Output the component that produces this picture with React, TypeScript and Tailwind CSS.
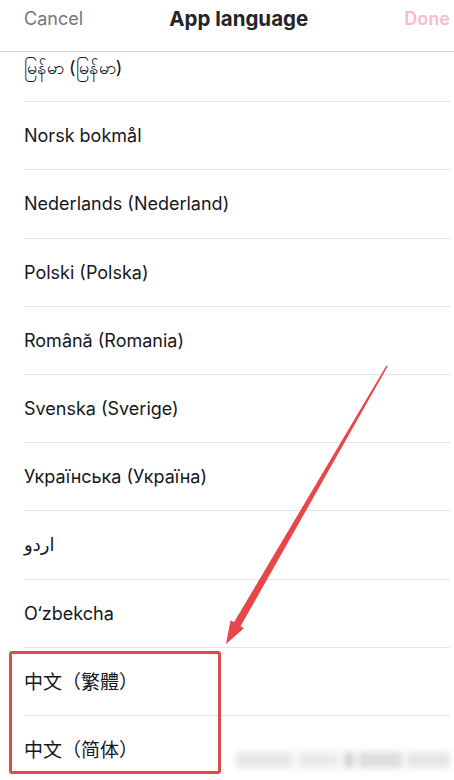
const languages = [
  "မြန်မာ (မြန်မာ)",
  "Norsk bokmål",
  "Nederlands (Nederland)",
  "Polski (Polska)",
  "Română (Romania)",
  "Svenska (Sverige)",
  "Українська (Україна)",
  "اردو",
  "O‘zbekcha",
  "中文（繁體）",
  "中文（简体）",
];

const fontStack =
  "font-['Inter','Noto_Sans_CJK_TC','Noto_Sans','DejaVu_Sans',sans-serif]";

const Header = () => {
  return (
    <div className="relative z-10 flex h-[52px] shrink-0 items-start justify-between border-b border-[#d6d6d8] bg-white pl-6 pr-1 pt-[6px]">
      <button className="text-[18px] leading-[26px] text-[#75767c]">
        Cancel
      </button>
      <h1 className="mr-[10px] text-[20.5px] font-bold leading-[26px] text-[#24252b]">
        App language
      </h1>
      <button className="text-[18px] font-semibold leading-[26px] text-[#f6bcc7]">
        Done
      </button>
    </div>
  );
};

const Row = ({ label }: { label: string }) => {
  const cjk = /[\u4e00-\u9fff]/.test(label);
  return (
    <div className="ml-6 mr-1 flex h-[68.2px] items-center border-b border-[#e4e4e6]">
      <span
        className={
          cjk
            ? "font-['Noto_Sans_CJK_TC',sans-serif] text-[19px] text-[#16171d]"
            : "text-[18px] text-[#16171d]"
        }
      >
        {label}
      </span>
    </div>
  );
};

export default function App() {
  return (
    <div
      className={`relative flex h-[780px] w-[454px] flex-col overflow-hidden bg-white ${fontStack}`}
    >
      <Header />
      <div className="flex-1 overflow-hidden">
        <div className="-mt-[18px]">
          {languages.map((l) => (
            <Row key={l} label={l} />
          ))}
        </div>
      </div>

      {/* annotation overlay */}
      <svg
        className="pointer-events-none absolute left-0 top-0"
        width="454"
        height="780"
        viewBox="0 0 454 780"
      >
        <polygon
          points="387.6,366.4 240.6,626.2 244,628.2 226,644 230.6,620.2 234,622.2 386.4,365.6"
          fill="#e8474a"
        />
      </svg>
      <div className="pointer-events-none absolute left-[9px] top-[651px] h-[123px] w-[212px] rounded-[3px] border-[3px] border-[#e04a4e]" />

      {/* blurred watermark */}
      <div className="pointer-events-none absolute left-[236px] top-[752px] flex h-[16px] w-[214px] gap-[4px] blur-[3px]">
        <div className="w-[58px] bg-[#e6e6e6]" />
        <div className="w-[44px] bg-[#ebebeb]" />
        <div className="w-[10px] bg-[#d4d4d4]" />
        <div className="w-[46px] bg-[#dedede]" />
        <div className="w-[44px] bg-[#e6e6e6]" />
      </div>
    </div>
  );
}
